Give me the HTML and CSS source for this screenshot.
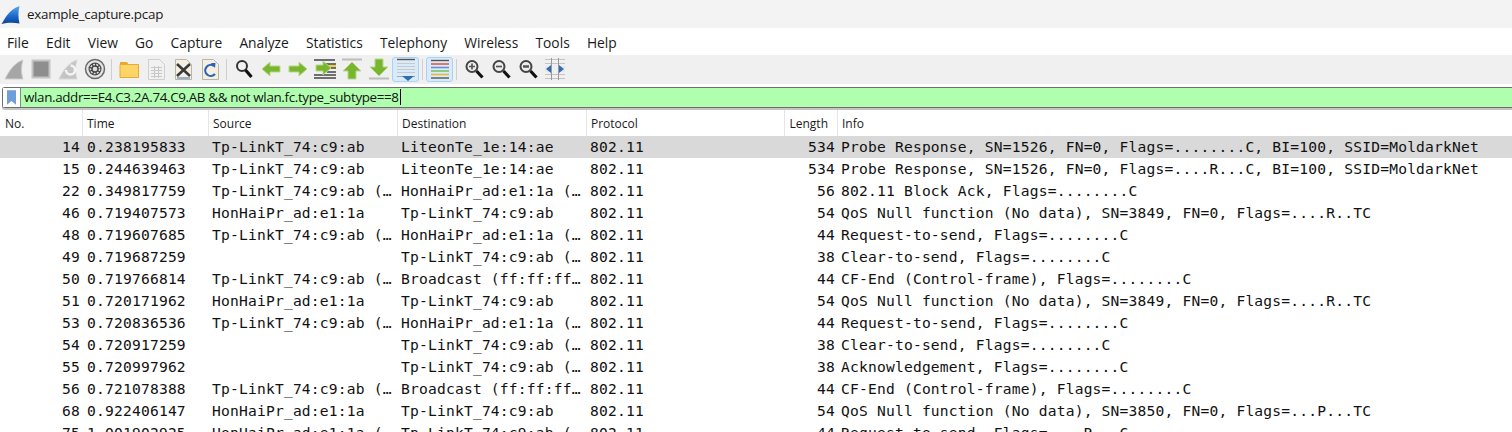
FILE: index.html
```html
<!DOCTYPE html>
<html lang="en">
<head>
<meta charset="utf-8">
<title>example_capture.pcap</title>
<link rel="stylesheet" href="styles.css">
</head>
<body>
<header class="titlebar">
  <svg class="logo" viewBox="0 0 20 20"><defs><linearGradient id="fin" x1="0" y1="0" x2="0" y2="1"><stop offset="0" stop-color="#5aa6ee"/><stop offset="0.6" stop-color="#1a66c8"/><stop offset="1" stop-color="#0a3f96"/></linearGradient></defs><path d="M0.500 19.500C4 15 7 5 19.500 0.500C18 6 18 13 19.500 19C13 17.500 6 18 0.500 19.500Z" fill="url(#fin)"/></svg>
  <span>example_capture.pcap</span>
</header>
<nav class="menubar">
  <span>File</span><span>Edit</span><span>View</span><span>Go</span><span>Capture</span><span>Analyze</span><span>Statistics</span><span>Telephony</span><span>Wireless</span><span>Tools</span><span>Help</span>
</nav>
<div class="toolbar">
  <span class="tool"><svg viewBox="0 0 24 24"><path d="M3 22C7 14 12 6 21 3C19 9 19 16 21 22Z" fill="#a6a6a6" stroke="#cfcfcf"/></svg></span>
  <span class="tool"><svg viewBox="0 0 24 24"><rect x="3.500" y="3.500" width="17" height="17" fill="#8e8e8e" stroke="#c4c4c4" stroke-width="2"/></svg></span>
  <span class="tool"><svg viewBox="0 0 24 24"><path d="M3 22C7 14 12 6 21 3C19 9 19 16 21 22Z" fill="#c4c4c4" stroke="#d8d8d8"/><path d="M10 13A4.500 4.500 0 1 0 14.500 8.500" fill="none" stroke="#f4f4f4" stroke-width="2.500"/></svg></span>
  <span class="tool"><svg viewBox="0 0 24 24"><circle cx="12" cy="12" r="9.500" fill="#e4e4e4" stroke="#6a6a6a" stroke-width="1.500"/><circle cx="12" cy="12" r="6.500" fill="#444"/><circle cx="12" cy="12" r="4.600" fill="none" stroke="#ddd" stroke-width="1.500" stroke-dasharray="2 1.200"/><circle cx="12" cy="12" r="2.300" fill="#ddd"/></svg></span>
  <i class="sep"></i>
  <span class="tool"><svg viewBox="0 0 24 24"><path d="M3 5H10L12 8H3Z" fill="#e6a92f"/><path d="M3 7.500H21.500V20.500H3Z" fill="#fdd567" stroke="#e2ab3a"/></svg></span>
  <span class="tool"><svg viewBox="0 0 24 24"><path d="M4.500 2.500H15.500L20.500 7.500V22.500H4.500Z" fill="#f1f1f1" stroke="#cfcfcf"/><path d="M7 10.500H18M7 13.500H18M7 16.500H18M7 19.500H18M10.500 9V21M14.500 9V21" stroke="#c8c8c8"/></svg></span>
  <span class="tool"><svg viewBox="0 0 24 24"><path d="M4.500 2.500H15.500L20.500 7.500V22.500H4.500Z" fill="#f4efe0" stroke="#b7b7a8"/><path d="M6 7L19 19M19 7L6 19" stroke="#3a3a3a" stroke-width="2.600"/><path d="M6 21H19" stroke="#7a9ac4" stroke-width="1.500"/></svg></span>
  <span class="tool"><svg viewBox="0 0 24 24"><path d="M4.500 2.500H15.500L20.500 7.500V22.500H4.500Z" fill="#f4efe0" stroke="#b7b7a8"/><path d="M16 9A5.500 5.500 0 1 0 17 17" fill="none" stroke="#2a64b8" stroke-width="2.200"/><path d="M13 6L17.500 6L17 11Z" fill="#2a64b8"/></svg></span>
  <i class="sep"></i>
  <span class="tool"><svg viewBox="0 0 24 24"><circle cx="10" cy="9" r="5" fill="#f2f2f2" stroke="#333" stroke-width="2"/><path d="M13.500 13L19.500 20" stroke="#111" stroke-width="3.200"/></svg></span>
  <span class="tool"><svg viewBox="0 0 24 24"><path d="M3 12L11 5V9H21V15H11V19Z" fill="#79b62f" stroke="#b9d68c"/></svg></span>
  <span class="tool"><svg viewBox="0 0 24 24"><path d="M21 12L13 5V9H3V15H13V19Z" fill="#79b62f" stroke="#b9d68c"/></svg></span>
  <span class="tool"><svg viewBox="0 0 24 24"><path d="M1 3H22M12 7H23M14 11H23M14 15H23M1 18H23M1 21H23" stroke="#444" stroke-width="1.400"/><path d="M15 9H23" stroke="#efcf3c" stroke-width="2"/><path d="M18 11L10 4V8H3V14H10V18Z" fill="#79b62f" stroke="#b9d68c"/></svg></span>
  <span class="tool"><svg viewBox="0 0 24 24"><path d="M2 2.500H22" stroke="#bdbdbd" stroke-width="2"/><path d="M12 5L21 14H16V22H8V14H3Z" fill="#79b62f" stroke="#b9d68c"/></svg></span>
  <span class="tool"><svg viewBox="0 0 24 24"><path d="M2 21.500H22" stroke="#bdbdbd" stroke-width="2"/><path d="M12 19L21 10H16V2H8V10H3Z" fill="#79b62f" stroke="#b9d68c"/></svg></span>
  <span class="tool on"><svg viewBox="0 0 24 24"><path d="M3 2.500H21" stroke="#555" stroke-width="1.400"/><path d="M3 6.500H21M3 9.500H21M3 12.500H21M3 15.500H21" stroke="#c9c9c9"/><path d="M3 19.500H21" stroke="#aaa"/><path d="M8 19H20L14 24Z" fill="#2f6db5"/></svg></span>
  <i class="sep"></i>
  <span class="tool on"><svg viewBox="0 0 24 24"><path d="M3 3.500H21" stroke="#555" stroke-width="1.400"/><path d="M3 7H21" stroke="#e2574c" stroke-width="1.600"/><path d="M3 10.500H21" stroke="#6a8fd0" stroke-width="1.600"/><path d="M3 14H21" stroke="#7cc06a" stroke-width="1.600"/><path d="M3 17.500H21" stroke="#e3b93c" stroke-width="1.600"/><path d="M3 21H21" stroke="#555" stroke-width="1.400"/></svg></span>
  <i class="sep"></i>
  <span class="tool"><svg viewBox="0 0 24 24"><circle cx="10" cy="9.500" r="5.500" fill="#eee" stroke="#444" stroke-width="2"/><path d="M14.500 14L20.500 20.500" stroke="#111" stroke-width="3.200"/><path d="M7 9.500H13M10 6.500V12.500" stroke="#555" stroke-width="1.700"/></svg></span>
  <span class="tool"><svg viewBox="0 0 24 24"><circle cx="10" cy="9.500" r="5.500" fill="#eee" stroke="#444" stroke-width="2"/><path d="M14.500 14L20.500 20.500" stroke="#111" stroke-width="3.200"/><path d="M7 9.500H13" stroke="#555" stroke-width="1.700"/></svg></span>
  <span class="tool"><svg viewBox="0 0 24 24"><circle cx="10" cy="9.500" r="5.500" fill="#eee" stroke="#444" stroke-width="2"/><path d="M14.500 14L20.500 20.500" stroke="#111" stroke-width="3.200"/><path d="M7 9.500H13" stroke="#555" stroke-width="2.500"/></svg></span>
  <span class="tool"><svg viewBox="0 0 24 24"><path d="M2 2.500H22M2 6.500H22M2 17.500H22M2 21.500H22" stroke="#c4c4c4"/><path d="M8.500 1V23M15.500 1V23" stroke="#999"/><path d="M2 9H7.500L7.500 15H2ZM22 9H16.500V15H22Z" fill="#e8e8e8"/><path d="M3 12L8 8V16ZM21 12L16 8V16Z" fill="#2f6db5"/></svg></span>
</div>
<div class="filter">
  <span class="bookmark"><svg viewBox="0 0 10 16"><path d="M0 0H10V16L5 12L0 16Z" fill="#6f9fd8"/></svg></span>
  <span class="filter-text">wlan.addr==E4.C3.2A.74.C9.AB &amp;&amp; not wlan.fc.type_subtype==8<i class="caret"></i></span>
</div>
<div class="headers">
  <div class="hd c-no">No.</div>
  <div class="hd c-time">Time</div>
  <div class="hd c-src">Source</div>
  <div class="hd c-dst">Destination</div>
  <div class="hd c-proto">Protocol</div>
  <div class="hd c-len">Length</div>
  <div class="hd c-info">Info</div>
</div>
<main class="rows">
  <div class="row sel"><span class="c-no r">14</span><span class="c-time">0.238195833</span><span class="c-src">Tp-LinkT_74:c9:ab</span><span class="c-dst">LiteonTe_1e:14:ae</span><span class="c-proto">802.11</span><span class="c-len r">534</span><span class="c-info">Probe Response, SN=1526, FN=0, Flags=........C, BI=100, SSID=MoldarkNet</span></div>
  <div class="row"><span class="c-no r">15</span><span class="c-time">0.244639463</span><span class="c-src">Tp-LinkT_74:c9:ab</span><span class="c-dst">LiteonTe_1e:14:ae</span><span class="c-proto">802.11</span><span class="c-len r">534</span><span class="c-info">Probe Response, SN=1526, FN=0, Flags=....R...C, BI=100, SSID=MoldarkNet</span></div>
  <div class="row"><span class="c-no r">22</span><span class="c-time">0.349817759</span><span class="c-src">Tp-LinkT_74:c9:ab (…</span><span class="c-dst">HonHaiPr_ad:e1:1a (…</span><span class="c-proto">802.11</span><span class="c-len r">56</span><span class="c-info">802.11 Block Ack, Flags=........C</span></div>
  <div class="row"><span class="c-no r">46</span><span class="c-time">0.719407573</span><span class="c-src">HonHaiPr_ad:e1:1a</span><span class="c-dst">Tp-LinkT_74:c9:ab</span><span class="c-proto">802.11</span><span class="c-len r">54</span><span class="c-info">QoS Null function (No data), SN=3849, FN=0, Flags=....R..TC</span></div>
  <div class="row"><span class="c-no r">48</span><span class="c-time">0.719607685</span><span class="c-src">Tp-LinkT_74:c9:ab (…</span><span class="c-dst">HonHaiPr_ad:e1:1a (…</span><span class="c-proto">802.11</span><span class="c-len r">44</span><span class="c-info">Request-to-send, Flags=........C</span></div>
  <div class="row"><span class="c-no r">49</span><span class="c-time">0.719687259</span><span class="c-src"></span><span class="c-dst">Tp-LinkT_74:c9:ab (…</span><span class="c-proto">802.11</span><span class="c-len r">38</span><span class="c-info">Clear-to-send, Flags=........C</span></div>
  <div class="row"><span class="c-no r">50</span><span class="c-time">0.719766814</span><span class="c-src">Tp-LinkT_74:c9:ab (…</span><span class="c-dst">Broadcast (ff:ff:ff…</span><span class="c-proto">802.11</span><span class="c-len r">44</span><span class="c-info">CF-End (Control-frame), Flags=........C</span></div>
  <div class="row"><span class="c-no r">51</span><span class="c-time">0.720171962</span><span class="c-src">HonHaiPr_ad:e1:1a</span><span class="c-dst">Tp-LinkT_74:c9:ab</span><span class="c-proto">802.11</span><span class="c-len r">54</span><span class="c-info">QoS Null function (No data), SN=3849, FN=0, Flags=....R..TC</span></div>
  <div class="row"><span class="c-no r">53</span><span class="c-time">0.720836536</span><span class="c-src">Tp-LinkT_74:c9:ab (…</span><span class="c-dst">HonHaiPr_ad:e1:1a (…</span><span class="c-proto">802.11</span><span class="c-len r">44</span><span class="c-info">Request-to-send, Flags=........C</span></div>
  <div class="row"><span class="c-no r">54</span><span class="c-time">0.720917259</span><span class="c-src"></span><span class="c-dst">Tp-LinkT_74:c9:ab (…</span><span class="c-proto">802.11</span><span class="c-len r">38</span><span class="c-info">Clear-to-send, Flags=........C</span></div>
  <div class="row"><span class="c-no r">55</span><span class="c-time">0.720997962</span><span class="c-src"></span><span class="c-dst">Tp-LinkT_74:c9:ab (…</span><span class="c-proto">802.11</span><span class="c-len r">38</span><span class="c-info">Acknowledgement, Flags=........C</span></div>
  <div class="row"><span class="c-no r">56</span><span class="c-time">0.721078388</span><span class="c-src">Tp-LinkT_74:c9:ab (…</span><span class="c-dst">Broadcast (ff:ff:ff…</span><span class="c-proto">802.11</span><span class="c-len r">44</span><span class="c-info">CF-End (Control-frame), Flags=........C</span></div>
  <div class="row"><span class="c-no r">68</span><span class="c-time">0.922406147</span><span class="c-src">HonHaiPr_ad:e1:1a</span><span class="c-dst">Tp-LinkT_74:c9:ab</span><span class="c-proto">802.11</span><span class="c-len r">54</span><span class="c-info">QoS Null function (No data), SN=3850, FN=0, Flags=...P...TC</span></div>
  <div class="row"><span class="c-no r">75</span><span class="c-time">1.001902925</span><span class="c-src">HonHaiPr_ad:e1:1a (…</span><span class="c-dst">Tp-LinkT_74:c9:ab (…</span><span class="c-proto">802.11</span><span class="c-len r">44</span><span class="c-info">Request-to-send, Flags=....R...C</span></div>
</main>
</body>
</html>
```
FILE: styles.css
```css
html, body {
  margin: 0;
  padding: 0;
  height: 432px;
  overflow: hidden;
  background: #fff;
  color: #1a1a1a;
  font-family: "Open Sans", "Noto Sans", sans-serif;
}
.titlebar {
  height: 28px;
  display: flex;
  align-items: center;
  gap: 7px;
  padding-left: 1px;
  background: #f3f3f3;
  font-size: 13.4px;
  letter-spacing: -0.25px;
}
.logo { width: 19px; height: 20px; margin-top: 1px; }
.menubar {
  height: 26px;
  display: flex;
  align-items: center;
  gap: 17.2px;
  padding: 1px 0 0 7px;
  background: #fff;
  border-bottom: 1px solid #f0f0f0;
  font-size: 13.8px;
}
.toolbar {
  height: 28px;
  display: flex;
  align-items: center;
  padding-bottom: 2px;
  box-sizing: border-box;
  background: #f0f0f0;
}
.tool {
  width: 27px;
  height: 25px;
  display: flex;
  align-items: center;
  justify-content: center;
  box-sizing: border-box;
}
.tool svg { width: 24px; height: 24px; }
.tool.on {
  background: #d9ebfb;
  border: 1px solid #a9d1f5;
  border-radius: 3px;
}
.sep {
  width: 1px;
  height: 21px;
  margin: 0 3px;
  background: #cfcfcf;
}
.filter {
  height: 19px;
  margin: 3px 0 0 2px;
  display: flex;
  background: #afffaf;
  border: 1px solid #6e6e6e;
  border-right: 0;
  border-radius: 3px 0 0 3px;
  box-shadow: 0 2px 0 #c4c4c4;
}
.bookmark {
  width: 17px;
  display: flex;
  align-items: center;
  justify-content: center;
  background: #fff;
  border-right: 1px solid #888;
}
.bookmark svg { width: 9px; height: 15px; }
.filter-text {
  padding-left: 3px;
  font-size: 13.4px;
  letter-spacing: -0.35px;
  line-height: 19px;
  color: #111;
}
.caret {
  display: inline-block;
  width: 1px;
  height: 16px;
  margin-left: 1px;
  vertical-align: -3px;
  background: #000;
}
.headers {
  height: 26px;
  margin-top: 2px;
  display: flex;
  font-size: 12px;
  color: #1a1a1a;
}
.hd {
  box-sizing: border-box;
  line-height: 27px;
  border-right: 1px solid #e5e5e5;
  padding-left: 4px;
}
.hd.c-no { padding-left: 5px; }
.hd.c-len { text-align: right; padding-right: 9px; padding-left: 0; }
.hd.c-info { border-right: 0; }
.c-no { width: 83px; }
.c-time { width: 126px; }
.c-src { width: 189px; }
.c-dst { width: 189px; }
.c-proto { width: 198px; }
.c-len { width: 53px; }
.c-info { flex: 1; }
.rows {
  font-family: "DejaVu Sans Mono", "Liberation Mono", monospace;
  font-size: 14.6px;
  letter-spacing: 0.2px;
}
.row {
  height: 22px;
  display: flex;
  white-space: nowrap;
  color: #111;
}
.row span {
  box-sizing: border-box;
  padding-left: 3px;
  line-height: 22px;
  overflow: hidden;
}
.row .c-time { padding-left: 4px; }
.row .r { padding: 0 3px 0 0; text-align: right; }
.row.sel { background: #d9d9d9; }
```
